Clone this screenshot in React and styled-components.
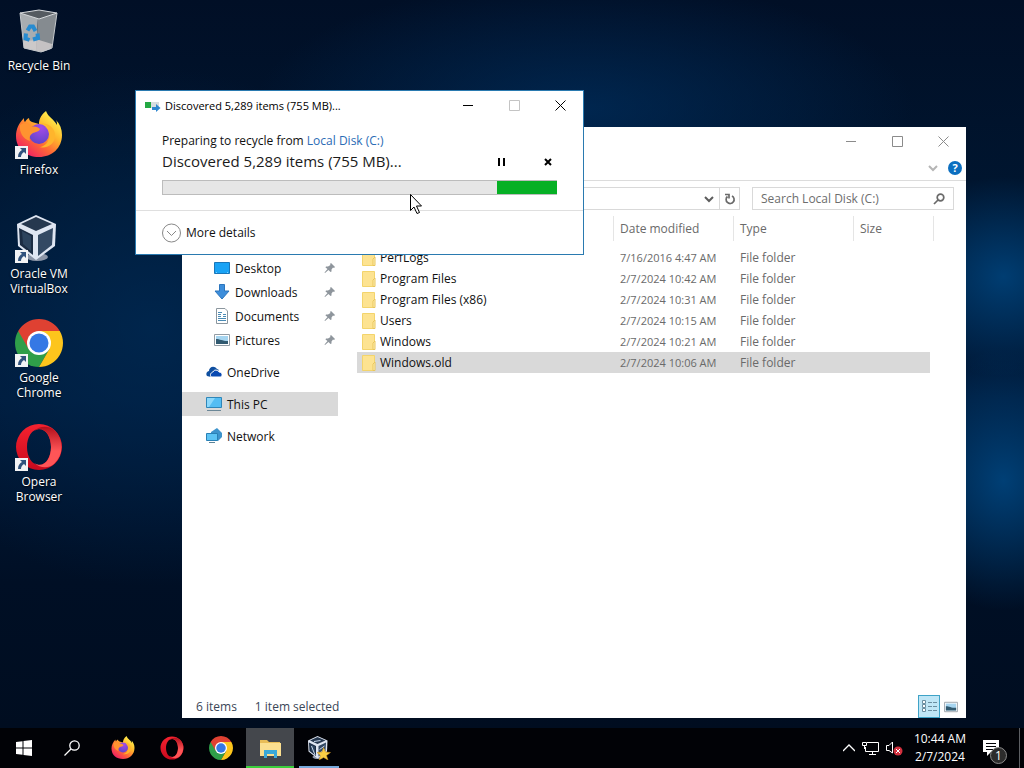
import React, { useState } from "react";
import styled, { createGlobalStyle } from "styled-components";

const GlobalStyle = createGlobalStyle`
    * {
        box-sizing: border-box;
    }
    body {
        margin: 0;
        font-family: "Open Sans", "Noto Sans", sans-serif;
        font-size: 12px;
        line-height: 15px;
        color: #111;
    }
    button {
        font: inherit;
        color: inherit;
        border: 0;
        padding: 0;
        background: none;
        cursor: default;
    }
    svg {
        display: block;
        flex: none;
    }
`;

const Screen = styled.div`
    display: flex;
    flex-direction: column;
    height: 100vh;
    overflow: hidden;
`;
const Desktop = styled.main`
    position: relative;
    flex: 1;
    min-height: 0;
    background:
        radial-gradient(ellipse 110px 100px at 98% 38%, rgba(0, 68, 125, 0.85), transparent),
        radial-gradient(ellipse 110px 130px at 98% 66%, rgba(0, 68, 125, 0.9), transparent),
        radial-gradient(ellipse 330px 130px at 57% 15%, rgba(0, 43, 88, 0.8), transparent),
        radial-gradient(ellipse 280px 260px at 15% 45%, rgba(0, 42, 84, 0.75), transparent),
        linear-gradient(#010f26 0%, #00152f 25%, #001a3a 55%, #000f25 80%, #000d20 100%);
`;
const Shortcuts = styled.div`
    display: grid;
    grid-auto-rows: 104px;
    width: 78px;
    padding-top: 7px;
`;
const Shortcut = styled.button`
    display: flex;
    flex-direction: column;
    align-items: center;
    gap: 3px;
    color: #fff;
    text-shadow: 0 1px 2px #000;
`;
const ShortcutIcon = styled.span`
    position: relative;
`;
const Arrow = styled.svg`
    position: absolute;
    left: 0;
    bottom: 0;
`;

const Window = styled.section`
    position: absolute;
    display: flex;
    flex-direction: column;
    background: #fff;
`;
const ExplorerWindow = styled(Window)`
    top: 127px;
    left: 182px;
    right: 58px;
    bottom: 10px;
    color: #6a6a6a;
`;
const DialogWindow = styled(Window)`
    top: 90px;
    left: 135px;
    width: 449px;
    border: 1px solid #2a7ab0;
`;
const TitleBar = styled.header`
    display: flex;
    align-items: center;
    height: 29px;
    padding-left: 9px;
    color: #000;
`;
const Title = styled.h1`
    flex: 1;
    margin: 0 0 0 4px;
    font-size: 11px;
    font-weight: 400;
`;
const CaptionButton = styled.button`
    display: grid;
    place-items: center;
    width: 46px;
    height: 29px;
    color: ${(props) => (props.$dim ? "#8b8b8b" : "#000")};
    &:disabled {
        color: #c4c4c4;
    }
`;

const Ribbon = styled.div`
    display: flex;
    justify-content: flex-end;
    align-items: center;
    gap: 9px;
    height: 25px;
    padding-right: 4px;
    border-bottom: 1px solid #dcdcdc;
`;
const AddressRow = styled.div`
    display: flex;
    gap: 12px;
    padding: 6px 12px 5px 100px;
`;
const Field = styled.div`
    display: flex;
    align-items: center;
    height: 23px;
    border: 1px solid #d9d9d9;
    flex: ${(props) => (props.$width ? "none" : 1)};
    width: ${(props) => props.$width || "auto"};
`;
const FieldInput = styled.input`
    flex: 1;
    min-width: 0;
    border: 0;
    outline: 0;
    padding: 0 8px;
    background: none;
    font: inherit;
    color: inherit;
    &::placeholder {
        color: #6d6d6d;
        opacity: 1;
    }
`;
const FieldButton = styled.button`
    display: grid;
    place-items: center;
    width: ${(props) => (props.$wide ? "28px" : "20px")};
    height: 21px;
    border-left: ${(props) => (props.$line ? "1px solid #d9d9d9" : "0")};
    color: #6a6a6a;
`;
const Panes = styled.div`
    display: flex;
    flex: 1;
    min-height: 0;
`;
const Sidebar = styled.nav`
    width: 156px;
    padding-top: 41px;
`;
const NavItem = styled.a`
    display: flex;
    align-items: center;
    gap: 5px;
    height: 24px;
    margin-top: ${(props) => (props.$nested ? 0 : "8px")};
    padding: 0 2px 0 ${(props) => (props.$nested ? "32px" : "24px")};
    background: ${(props) => (props.$active ? "#d9d9d9" : "none")};
    color: #111;
    text-decoration: none;
`;
const NavLabel = styled.span`
    flex: 1;
`;
const FilePane = styled.div`
    flex: 1;
    padding-left: 19px;
`;
const FileTable = styled.table`
    width: 577px;
    table-layout: fixed;
    border-collapse: separate;
    border-spacing: 0;
`;
const Th = styled.th`
    width: ${(props) => props.$width};
    padding: 1px 0 6px;
    text-align: left;
    font-weight: 400;
`;
const ThLabel = styled.span`
    display: block;
    height: 25px;
    padding-left: 6px;
    border-right: 1px solid #e5e5e5;
    line-height: 25px;
`;
const Td = styled.td`
    height: 21px;
    padding: 0 0 0 6px;
    background: ${(props) => (props.$selected ? "#d9d9d9" : "none")};
    white-space: nowrap;
    font-size: ${(props) => (props.$small ? "11px" : "12px")};
    &:last-child {
        padding: 0 4px 0 0;
        background-clip: content-box;
    }
`;
const FileName = styled.span`
    display: flex;
    align-items: center;
    gap: 4px;
    margin-left: -1px;
    color: #111;
`;
const StatusBar = styled.footer`
    display: flex;
    align-items: center;
    gap: 18px;
    height: 23px;
    padding: 0 4px 0 14px;
    color: #3a4657;
`;
const ViewButtons = styled.div`
    display: flex;
    margin-left: auto;
`;
const ViewButton = styled.button`
    display: grid;
    place-items: center;
    width: 22px;
    height: 23px;
    border: 1px solid ${(props) => (props.$active ? "#3fa3c7" : "transparent")};
    background: ${(props) => (props.$active ? "#bfe6f6" : "none")};
`;

const DialogBody = styled.div`
    padding: 12px 26px 15px;
    border-bottom: 1px solid #dfdfdf;
`;
const Line = styled.p`
    margin: 0;
    line-height: 18px;
`;
const Link = styled.a`
    color: #2b6cb5;
    text-decoration: none;
`;
const Summary = styled.div`
    display: flex;
    align-items: center;
    height: 24px;
    font-size: 15px;
`;
const SummaryText = styled.span`
    flex: 1;
    padding-bottom: 2px;
    color: #1b1b1b;
`;
const SmallButton = styled.button`
    display: grid;
    place-items: center;
    width: 18px;
    height: 18px;
    margin-left: 28px;
`;
const ProgressTrack = styled.div`
    display: flex;
    justify-content: flex-end;
    height: 15px;
    margin-top: 6px;
    border: 1px solid #bcbcbc;
    border-right: 0;
    background: #e6e6e6;
`;
const ProgressChunk = styled.div`
    width: 60px;
    background: #06b025;
`;
const DetailsButton = styled.button`
    display: flex;
    align-items: center;
    gap: 4px;
    height: 43px;
    padding-left: 26px;
`;
const Cursor = styled.svg`
    position: absolute;
    left: 410px;
    top: 194px;
`;

const Taskbar = styled.footer`
    display: flex;
    height: 40px;
    background: #010206;
    color: #fff;
`;
const TaskButton = styled.button`
    display: grid;
    place-items: center;
    width: 48px;
`;
const Apps = styled.div`
    display: flex;
    gap: 1px;
    flex: 1;
    padding-left: 3px;
`;
const AppButton = styled(TaskButton)`
    background-color: ${(props) => (props.$active ? "#44474c" : "transparent")};
    background-image: ${(props) => (props.$bar ? `linear-gradient(${props.$bar}, ${props.$bar})` : "none")};
    background-size: ${(props) => (props.$active ? "48px" : "40px")} 2px;
    background-position: bottom center;
    background-repeat: no-repeat;
`;
const Tray = styled.div`
    display: flex;
    align-items: center;
    gap: 7px;
`;
const Clock = styled.time`
    margin: 0 10px 0 4px;
    text-align: center;
    line-height: 18px;
`;
const Notifications = styled.button`
    position: relative;
    height: 40px;
    margin-right: 12px;
`;
const Badge = styled.span`
    position: absolute;
    left: 7px;
    top: 19px;
    width: 17px;
    height: 17px;
    border: 1px solid #8b8b8b;
    border-radius: 50%;
    background: #2c2c2c;
    line-height: 15px;
`;
const ShowDesktop = styled.button`
    width: 5px;
    height: 40px;
    border-left: 1px solid #5c5f63;
`;

/* logos */
const RecycleBinIcon = () => (
    <svg width="48" height="48" viewBox="0 0 48 48">
        <path d="M5 6 23 11 21 44 9 41z" fill="#a8adb1" />
        <path d="M23 11 42 6 37 41 27 45 21 44z" fill="#858b90" />
        <path d="M5 6 24 3 42 6 24 12z" fill="#555b61" stroke="#d7dadd" />
        <path d="M8 34 24 33 37 37 36 42 27 45 9 41z" fill="#d4cfd0" opacity=".8" />
        <path d="M5 6 9 41 26 45 37 41 42 6" fill="none" stroke="#c3c7cb" />
        <g fill="none" stroke="#268bd1" strokeWidth="4">
            <path d="M12.500 23.500 15 19.500H18L20.500 24" />
            <path d="M22.500 26.500 23 31 18 32.500" />
            <path d="M14.500 33 10.500 31.500 11 26.500" />
        </g>
    </svg>
);
const FirefoxIcon = ({ size }) => (
    <svg width={size} height={size} viewBox="0 0 48 48">
        <defs>
            <linearGradient id="fxBody" x1=".85" y1=".1" x2=".2" y2=".9">
                <stop offset="0" stopColor="#fff44f" />
                <stop offset=".35" stopColor="#ffb62c" />
                <stop offset=".65" stopColor="#ff6a35" />
                <stop offset="1" stopColor="#f0265f" />
            </linearGradient>
            <radialGradient id="fxGlobe" cx=".6" cy=".2" r=".9">
                <stop offset="0" stopColor="#a44be8" />
                <stop offset="1" stopColor="#5943c6" />
            </radialGradient>
        </defs>
        <path
            d="M31 0c-6 5-7 9-7 13l-7-2c-2-1-3-2-3-4-2 1-3 2-4 4-1-1-1-2-1-4C4 12 1 18 1 25c0 13 10 21 23 21s23-9 23-22c0-6-2-11-6-15 1 2 1 3 1 5C39 8 33 6 31 0z"
            fill="url(#fxBody)"
        />
        <circle cx="24" cy="23" r="10" fill="url(#fxGlobe)" />
        <path d="M5 14c4-3 9-2 12 2 3-1 6 0 8 2-1 3-5 3-7 4-3 2-4 4-3 8C8 28 4 21 5 14z" fill="#ff9330" />
        <path d="M24 13c3-1 8 1 9 4-1 0-2-1-3-1 5 3 6 9 3 14-2 4-6 6-9 6 9 2 17-4 16-13-1-7-8-12-16-10z" fill="#ffb52c" />
    </svg>
);
const VirtualBoxIcon = ({ size, starred }) => (
    <svg width={size} height={size} viewBox="0 0 48 48">
        <ellipse cx="22" cy="42" rx="11" ry="4" fill="#8c96a8" />
        <path d="M21 0 41 9 40 31 21 45 3 31 2 9z" fill="#dfe6f2" />
        <path d="M21 2 37 9 21 16 6 9z" fill="#26384f" />
        <path d="M4 13 18 20V40L5 30z" fill="#1b2c43" />
        <path d="M38 13 23 20V41L37 30z" fill="#334963" />
        <path d="M7 16 16 21V36L8 29z" fill="#2c435d" />
        {starred && (
            <>
                <path d="M9 20 16 38M25 27 35 20M26 34 35 27M14 11 27 9" stroke="#c8d8ee" strokeWidth="2" />
                <path d="M33 23 37 32 47 33 39 39 42 48 33 43 24 48 27 39 20 33 30 32z" fill="#f9cf45" stroke="#c68d1c" />
            </>
        )}
    </svg>
);
const ChromeIcon = ({ size }) => (
    <svg width={size} height={size} viewBox="0 0 48 48">
        <path d="M3.220 12A24 24 0 0 0 24 48L34.390 30 24 24z" fill="#2f9e49" />
        <path d="M44.780 12A24 24 0 0 1 24 48L34.390 30 24 12z" fill="#fdc51c" />
        <path d="M24 12H44.780A24 24 0 0 0 3.220 12L13.610 30 24 24z" fill="#df4132" />
        <circle cx="24" cy="24" r="12" fill="#fff" />
        <circle cx="24" cy="24" r="9.500" fill="#3578e5" />
    </svg>
);
const OperaIcon = ({ size }) => (
    <svg width={size} height={size} viewBox="0 0 48 48">
        <defs>
            <linearGradient id="opRing" x1="0" y1="0" x2="0" y2="1">
                <stop offset="0" stopColor="#f5222f" />
                <stop offset="1" stopColor="#c90a1e" />
            </linearGradient>
            <linearGradient id="opSide" x1="0" y1="0" x2="0" y2="1">
                <stop offset="0" stopColor="#b3101c" />
                <stop offset=".6" stopColor="#ff5557" />
            </linearGradient>
        </defs>
        <path
            fillRule="evenodd"
            d="M24 1a23 23 0 1 0 0 46 23 23 0 1 0 0-46zM24 6c7 0 12 8 12 18s-5 18-12 18-12-8-12-18S17 6 24 6z"
            fill="url(#opRing)"
        />
        <path d="M19 8c5-5 14-6 20-1a23 23 0 0 1 0 34c-6 5-14 4-20-1 10 6 17-4 17-16S29 2 19 8z" fill="url(#opSide)" />
    </svg>
);
const ShortcutArrow = () => (
    <Arrow width="13" height="13" viewBox="0 0 13 13">
        <path d="M0 0H13V13H0z" fill="#f2f3f5" />
        <path d="M5 2H11V8L9 6C7 7 6 9 6 11H3C3 7 5 5 7 4z" fill="#30527d" />
    </Arrow>
);
const ExplorerIcon = () => (
    <svg width="24" height="24" viewBox="0 0 24 24">
        <path d="M2 4H9L11 6H22V20H2z" fill="#e9bd57" />
        <path d="M2 7H23V20H2z" fill="#fbdf8f" />
        <path d="M6 22V14H19V22H16V18H9V22z" fill="#3ba9d8" />
    </svg>
);

/* small glyphs */
const Minimize = () => (
    <svg width="11" height="11" viewBox="0 0 11 11">
        <path d="M0 5.500H10" stroke="currentColor" />
    </svg>
);
const Maximize = () => (
    <svg width="11" height="11" viewBox="0 0 11 11">
        <path d="M.5 .5H10.500V10.500H.5z" fill="none" stroke="currentColor" />
    </svg>
);
const Close = () => (
    <svg width="11" height="11" viewBox="0 0 11 11">
        <path d="M.5 .5 10.500 10.500M10.500 .5 .5 10.500" stroke="currentColor" />
    </svg>
);
const Chevron = ({ color = "#5d5d5d", width = 2, up }) => (
    <svg width="12" height="12" viewBox="0 0 12 12" fill="none" stroke={color} strokeWidth={width}>
        <path d={up ? "M0 9 6 3 12 9" : "M2 4 6 8 10 4"} />
    </svg>
);
const Pin = () => (
    <svg width="12" height="12" viewBox="0 0 12 12" fill="#8e959c">
        <path d="M7 1 11 5 10 6 9 5.500 7.500 7.500 7.500 9.500 6.500 10 4.500 8 1 11 .5 10.500 3.500 7 1.500 5.500 2 4.500 4 4.500 6.500 3 6 2z" />
    </svg>
);
const Folder = () => (
    <svg width="14" height="16" viewBox="0 0 14 16">
        <path d="M.5 .5H12.500V15.500H.5z" fill="#fde391" stroke="#f3d46c" />
        <path d="M11 9 13 7V15.500H11z" fill="#fff0b5" stroke="#e9c65c" />
    </svg>
);

const navIcons = {
    Desktop: (
        <>
            <path d="M.5 2.500H15.500V13.500H.5z" fill="#1aa3f5" stroke="#1976b9" />
            <path d="M2 12.500H14" stroke="#82d2ff" strokeDasharray="1 10" />
        </>
    ),
    Downloads: <path d="M5.500 .5H10.500V7H15L8 15 1 7H5.500z" fill="#3d8edb" stroke="#2b75bd" />,
    Documents: (
        <>
            <path d="M2.500 .5H11L13.500 3V15.500H2.500z" fill="#fff" stroke="#8b969e" />
            <path d="M4 4.500H8M4 6.500H7M9 6.500H12M4 8.500H7M9 8.500H12M4 10.500H12M4 12.500H12" stroke="#4a8bb5" />
        </>
    ),
    Pictures: (
        <>
            <path d="M.5 2.500H15.500V13.500H.5z" fill="#fff" stroke="#929ca4" />
            <path d="M2 4H14V12H2z" fill="#a6d5f0" />
            <path d="M2 7C6 7 8 9 14 9V12H2z" fill="#315a70" />
        </>
    ),
    OneDrive: (
        <>
            <path d="M1 12C-1 9 2 7 3 7 3 3 8 1 11 5L13 6 5 13z" fill="#0f4fa0" />
            <path d="M5 13C3 9 7 8 7 8 8 5 12 6 13 8 16 8 17 11 15 13z" fill="#094ab2" stroke="#fff" />
        </>
    ),
    "This PC": (
        <>
            <path d="M.5 1.500H15.500V11.500H.5z" fill="#54bdf3" stroke="#2f86b8" />
            <path d="M1 2H9L3 11H1z" fill="#8cd8fb" />
            <path d="M1 14.500H15" stroke="#6b8797" />
        </>
    ),
    Network: (
        <>
            <path d="M5 4 11 0 16 5V9L12 13 5 8z" fill="#3d93cc" />
            <path d="M.5 5.500H11.500V12.500H.5z" fill="#5cc3f4" stroke="#2980b5" />
            <path d="M3 14.500H9" stroke="#5b8499" />
        </>
    ),
};

const navItems = [
    { name: "Desktop", nested: true },
    { name: "Downloads", nested: true },
    { name: "Documents", nested: true },
    { name: "Pictures", nested: true },
    { name: "OneDrive" },
    { name: "This PC" },
    { name: "Network" },
];
const files = [
    { name: "PerfLogs", date: "7/16/2016 4:47 AM" },
    { name: "Program Files", date: "2/7/2024 10:42 AM" },
    { name: "Program Files (x86)", date: "2/7/2024 10:31 AM" },
    { name: "Users", date: "2/7/2024 10:15 AM" },
    { name: "Windows", date: "2/7/2024 10:21 AM" },
    { name: "Windows.old", date: "2/7/2024 10:06 AM" },
];
const shortcuts = [
    { lines: ["Recycle Bin"], icon: <RecycleBinIcon />, plain: true },
    { lines: ["Firefox"], icon: <FirefoxIcon size={48} /> },
    { lines: ["Oracle VM", "VirtualBox"], icon: <VirtualBoxIcon size={48} /> },
    { lines: ["Google", "Chrome"], icon: <ChromeIcon size={48} /> },
    { lines: ["Opera", "Browser"], icon: <OperaIcon size={48} /> },
];

const CaptionButtons = ({ dim, fixed }) => (
    <>
        <CaptionButton $dim={dim} aria-label="Minimize">
            <Minimize />
        </CaptionButton>
        <CaptionButton $dim={dim} disabled={fixed} aria-label="Maximize">
            <Maximize />
        </CaptionButton>
        <CaptionButton $dim={dim} aria-label="Close">
            <Close />
        </CaptionButton>
    </>
);

const HelpMark = styled.span`
    display: block;
    width: 14px;
    height: 14px;
    border-radius: 50%;
    background: #0c6fc0;
    color: #fff;
    font-size: 11px;
    font-weight: 700;
    line-height: 14px;
    text-align: center;
`;

const Explorer = () => {
    const [selected, setSelected] = useState("Windows.old");
    const [place, setPlace] = useState("This PC");
    return (
        <ExplorerWindow aria-label="Local Disk (C:)">
            <TitleBar>
                <Title as="span" />
                <CaptionButtons dim />
            </TitleBar>
            <Ribbon>
                <button aria-label="Expand the ribbon">
                    <Chevron color="#b5b5b5" />
                </button>
                <button aria-label="Help">
                    <HelpMark>?</HelpMark>
                </button>
            </Ribbon>
            <AddressRow>
                <Field>
                    <FieldInput aria-label="Address" />
                    <FieldButton aria-label="Previous locations">
                        <Chevron />
                    </FieldButton>
                    <FieldButton $line aria-label="Refresh">
                        <svg width="12" height="12" viewBox="0 0 12 12" fill="none" stroke="currentColor" strokeWidth="1.700">
                            <path d="M8 3A4 4 0 1 1 3.500 3.500M1 1.500H5V5.500" />
                        </svg>
                    </FieldButton>
                </Field>
                <Field $width="202px">
                    <FieldInput type="search" aria-label="Search" placeholder="Search Local Disk (C:)" />
                    <FieldButton $wide aria-label="Start search">
                        <svg width="12" height="12" viewBox="0 0 12 12" fill="none" stroke="currentColor" strokeWidth="1.700">
                            <circle cx="7.500" cy="4.500" r="3.300" />
                            <path d="M5 7 1 11" />
                        </svg>
                    </FieldButton>
                </Field>
            </AddressRow>
            <Panes>
                <Sidebar>
                    {navItems.map(({ name, nested }) => (
                        <NavItem
                            key={name}
                            href="#"
                            $nested={nested}
                            $active={place === name}
                            onClick={() => setPlace(name)}
                        >
                            <svg width="16" height="16" viewBox="0 0 16 16">
                                {navIcons[name]}
                            </svg>
                            <NavLabel>{name}</NavLabel>
                            {nested && <Pin />}
                        </NavItem>
                    ))}
                </Sidebar>
                <FilePane>
                    <FileTable>
                        <thead>
                            <tr>
                                <Th $width="257px" aria-label="Name">
                                    <ThLabel />
                                </Th>
                                <Th $width="120px">
                                    <ThLabel>Date modified</ThLabel>
                                </Th>
                                <Th $width="120px">
                                    <ThLabel>Type</ThLabel>
                                </Th>
                                <Th $width="80px">
                                    <ThLabel>Size</ThLabel>
                                </Th>
                            </tr>
                        </thead>
                        <tbody>
                            {files.map(({ name, date }) => {
                                const isSelected = selected === name;
                                return (
                                    <tr key={name} onClick={() => setSelected(name)}>
                                        <Td $selected={isSelected}>
                                            <FileName>
                                                <Folder />
                                                {name}
                                            </FileName>
                                        </Td>
                                        <Td $selected={isSelected} $small>
                                            {date}
                                        </Td>
                                        <Td $selected={isSelected}>File folder</Td>
                                        <Td $selected={isSelected} />
                                    </tr>
                                );
                            })}
                        </tbody>
                    </FileTable>
                </FilePane>
            </Panes>
            <StatusBar>
                <span>6 items</span>
                <span>1 item selected</span>
                <ViewButtons>
                    <ViewButton $active aria-label="Details view">
                        <svg width="17" height="15" viewBox="0 0 17 15" fill="none" stroke="#6b8ea0">
                            <path
                                d="M1.500 1.500H4.500V4.500H1.500zM1.500 5.500H4.500V8.500H1.500zM1.500 9.500H4.500V12.500H1.500z"
                                fill="#fff"
                            />
                            <path d="M7 3.500H16M7 7.500H16M7 11.500H16" strokeDasharray="4 1" />
                        </svg>
                    </ViewButton>
                    <ViewButton aria-label="Large icons view">
                        <svg width="14" height="12" viewBox="0 1 16 14">
                            {navIcons.Pictures}
                        </svg>
                    </ViewButton>
                </ViewButtons>
            </StatusBar>
        </ExplorerWindow>
    );
};

const RecycleDialog = () => (
    <DialogWindow role="dialog" aria-labelledby="dialog-title">
        <TitleBar>
            <svg width="16" height="12" viewBox="0 0 16 12">
                <path d="M0 2H6V8H0z" fill="#23a843" />
                <path d="M6 2H14V8H6z" fill="#d8dcdf" />
                <path d="M7 7H11V4L15.500 8 11 12V10H7z" fill="#2f86cf" />
            </svg>
            <Title id="dialog-title">Discovered 5,289 items (755 MB)...</Title>
            <CaptionButtons fixed />
        </TitleBar>
        <DialogBody>
            <Line>
                Preparing to recycle from <Link href="#">Local Disk (C:)</Link>
            </Line>
            <Summary>
                <SummaryText>Discovered 5,289 items (755 MB)...</SummaryText>
                <SmallButton aria-label="Pause">
                    <svg width="8" height="8" viewBox="0 0 8 8">
                        <path d="M0 0H2V8H0zM5 0H7V8H5z" />
                    </svg>
                </SmallButton>
                <SmallButton aria-label="Cancel">
                    <svg width="8" height="8" viewBox="0 0 8 8" stroke="#000" strokeWidth="2">
                        <path d="M1 1 7 7M7 1 1 7" />
                    </svg>
                </SmallButton>
            </Summary>
            <ProgressTrack role="progressbar" aria-label="Discovering items">
                <ProgressChunk />
            </ProgressTrack>
        </DialogBody>
        <DetailsButton>
            <svg width="20" height="20" viewBox="0 0 20 20" fill="none" stroke="#888">
                <circle cx="9.500" cy="10" r="9" />
                <path d="M5 8 9.500 12.500 14 8" />
            </svg>
            More details
        </DetailsButton>
    </DialogWindow>
);

const App = () => (
    <Screen>
        <GlobalStyle />
        <Desktop>
            <Shortcuts>
                {shortcuts.map(({ lines, icon, plain }) => (
                    <Shortcut key={lines[0]}>
                        <ShortcutIcon>
                            {icon}
                            {!plain && <ShortcutArrow />}
                        </ShortcutIcon>
                        <span>
                            {lines.map((line) => (
                                <div key={line}>{line}</div>
                            ))}
                        </span>
                    </Shortcut>
                ))}
            </Shortcuts>
            <Explorer />
            <RecycleDialog />
            <Cursor width="12" height="20" viewBox="0 0 12 20">
                <path d="M.5 .5V16.500L4 13 7 19.500 9.500 18.500 6.500 12H11.500z" fill="#fff" stroke="#000" />
            </Cursor>
        </Desktop>
        <Taskbar>
            <TaskButton aria-label="Start">
                <svg width="16" height="16" viewBox="0 0 16 16" fill="#fff">
                    <path d="M0 2 6.500 1.200V7.500H0zM7.500 1 16 0V7.500H7.500zM0 8.500H6.500V14.800L0 14zM7.500 8.500H16V16L7.500 15z" />
                </svg>
            </TaskButton>
            <TaskButton aria-label="Search">
                <svg width="16" height="16" viewBox="0 0 16 16" fill="none" stroke="#fff" strokeWidth="1.300">
                    <circle cx="10.500" cy="5.500" r="4.700" />
                    <path d="M7 9 .5 15.500" />
                </svg>
            </TaskButton>
            <Apps>
                <AppButton aria-label="Firefox">
                    <FirefoxIcon size={24} />
                </AppButton>
                <AppButton aria-label="Opera">
                    <OperaIcon size={24} />
                </AppButton>
                <AppButton aria-label="Chrome">
                    <ChromeIcon size={24} />
                </AppButton>
                <AppButton $active $bar="#3ccf3c" aria-label="File Explorer">
                    <ExplorerIcon />
                </AppButton>
                <AppButton $bar="#76a9dc" aria-label="VirtualBox">
                    <VirtualBoxIcon size={24} starred />
                </AppButton>
            </Apps>
            <Tray>
                <button aria-label="Show hidden icons">
                    <Chevron color="#fff" width={1.3} up />
                </button>
                <svg width="17" height="15" viewBox="0 0 17 15" fill="none" stroke="#fff">
                    <path d="M5 1.500H16.500V10.500H3.500V6M10.500 11V13.500M7 13.500H14M.5 1.500H4.500V4.500H.5zM2.500 5V8" />
                </svg>
                <svg width="17" height="16" viewBox="0 0 17 16" fill="none" stroke="#fff">
                    <path d="M.5 5.500H3L6.500 2V13L3 10.500H.5z" />
                    <circle cx="12" cy="11" r="4.500" fill="#d3313f" stroke="none" />
                    <path d="M10 9 14 13M14 9 10 13" />
                </svg>
                <Clock>
                    <div>10:44 AM</div>
                    <div>2/7/2024</div>
                </Clock>
                <Notifications aria-label="1 new notification">
                    <svg width="17" height="16" viewBox="0 0 17 16">
                        <path d="M0 0H16V12H8L4 16V12H0z" fill="#fff" />
                        <path d="M3 3.500H13M3 6.500H13M3 9.500H10" stroke="#010206" />
                    </svg>
                    <Badge>1</Badge>
                </Notifications>
                <ShowDesktop aria-label="Show desktop" />
            </Tray>
        </Taskbar>
    </Screen>
);

export default App;
